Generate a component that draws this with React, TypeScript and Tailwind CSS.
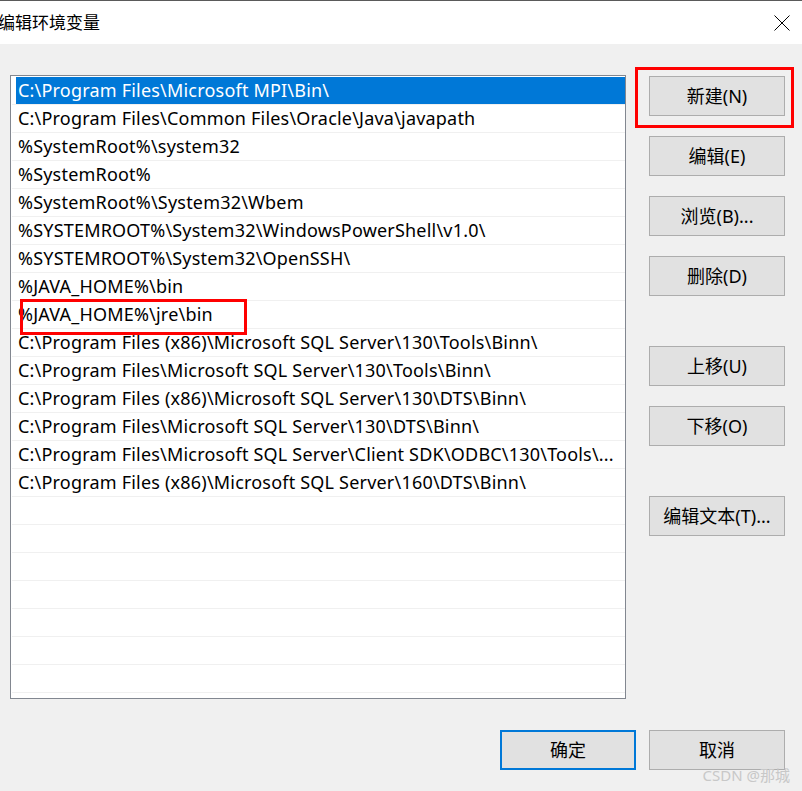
import React from "react";

const rows = [
  "C:\\Program Files\\Microsoft MPI\\Bin\\",
  "C:\\Program Files\\Common Files\\Oracle\\Java\\javapath",
  "%SystemRoot%\\system32",
  "%SystemRoot%",
  "%SystemRoot%\\System32\\Wbem",
  "%SYSTEMROOT%\\System32\\WindowsPowerShell\\v1.0\\",
  "%SYSTEMROOT%\\System32\\OpenSSH\\",
  "%JAVA_HOME%\\bin",
  "%JAVA_HOME%\\jre\\bin",
  "C:\\Program Files (x86)\\Microsoft SQL Server\\130\\Tools\\Binn\\",
  "C:\\Program Files\\Microsoft SQL Server\\130\\Tools\\Binn\\",
  "C:\\Program Files (x86)\\Microsoft SQL Server\\130\\DTS\\Binn\\",
  "C:\\Program Files\\Microsoft SQL Server\\130\\DTS\\Binn\\",
  "C:\\Program Files\\Microsoft SQL Server\\Client SDK\\ODBC\\130\\Tools\\...",
  "C:\\Program Files (x86)\\Microsoft SQL Server\\160\\DTS\\Binn\\",
];

const font = { fontFamily: '"Noto Sans", "Noto Sans CJK SC", sans-serif' };

function Btn({ label, className = "" }: { label: string; className?: string }) {
  return (
    <div
      className={`w-[136px] h-[40px] bg-[#e1e1e1] border border-[#adadad] flex items-center justify-center text-[18px] text-black ${className}`}
    >
      {label}
    </div>
  );
}

export default function App() {
  const all = [...rows];
  while (all.length < 22) all.push("");
  return (
    <div
      className="relative w-[802px] h-[791px] overflow-hidden bg-[#f0f0f0] text-black"
      style={font}
    >
      <div className="h-[44px] bg-white border-t border-[#5a5a5a] flex items-center justify-between">
        <span className="ml-[-2px] text-[17px] leading-none">编辑环境变量</span>
        <svg width="16" height="16" viewBox="0 0 16 16" className="mr-[12px]">
          <path d="M0.5 0.5 L15.5 15.5 M15.5 0.5 L0.5 15.5" stroke="#000" strokeWidth="1" />
        </svg>
      </div>
      <div className="flex pt-[31px] pl-[10px]">
        <div className="w-[616px] h-[624px] border border-[#828790] bg-white pt-[1px] overflow-hidden">
          {all.map((r, i) => (
            <div
              key={i}
              className="relative ml-[1px] h-[28px] border-b border-[#f0f0f0] flex"
            >
              <div
                className={`ml-[4px] flex-1 h-[27px] flex items-center pl-[2px] text-[18px] tracking-[0.2px] whitespace-nowrap ${
                  i === 0 ? "bg-[#0078d7] text-white" : ""
                }`}
              >
                {r}
              </div>
              {i === 8 && (
                <div className="absolute left-[8px] top-[-2px] w-[227px] h-[36px] border-[3px] border-[#ff0000]" />
              )}
            </div>
          ))}
        </div>
        <div className="ml-[23px] mt-[1px] flex flex-col">
          <div className="relative">
            <Btn label="新建(N)" />
            <div className="absolute left-[-14px] top-[-9px] w-[159px] h-[61px] border-[3px] border-[#ff0000]" />
          </div>
          <Btn label="编辑(E)" className="mt-[20px]" />
          <Btn label="浏览(B)..." className="mt-[20px]" />
          <Btn label="删除(D)" className="mt-[20px]" />
          <Btn label="上移(U)" className="mt-[50px]" />
          <Btn label="下移(O)" className="mt-[20px]" />
          <Btn label="编辑文本(T)..." className="mt-[50px]" />
        </div>
      </div>
      <div className="flex justify-end pr-[17px] pt-[31px] gap-[13px]">
        <div className="w-[136px] h-[40px] bg-[#e1e1e1] border-2 border-[#0078d7] flex items-center justify-center text-[18px]">
          确定
        </div>
        <Btn label="取消" />
      </div>
      <div className="absolute right-[12px] bottom-[8px] text-[15px] text-[#c8c8c8] leading-none">
        CSDN @那城
      </div>
    </div>
  );
}
